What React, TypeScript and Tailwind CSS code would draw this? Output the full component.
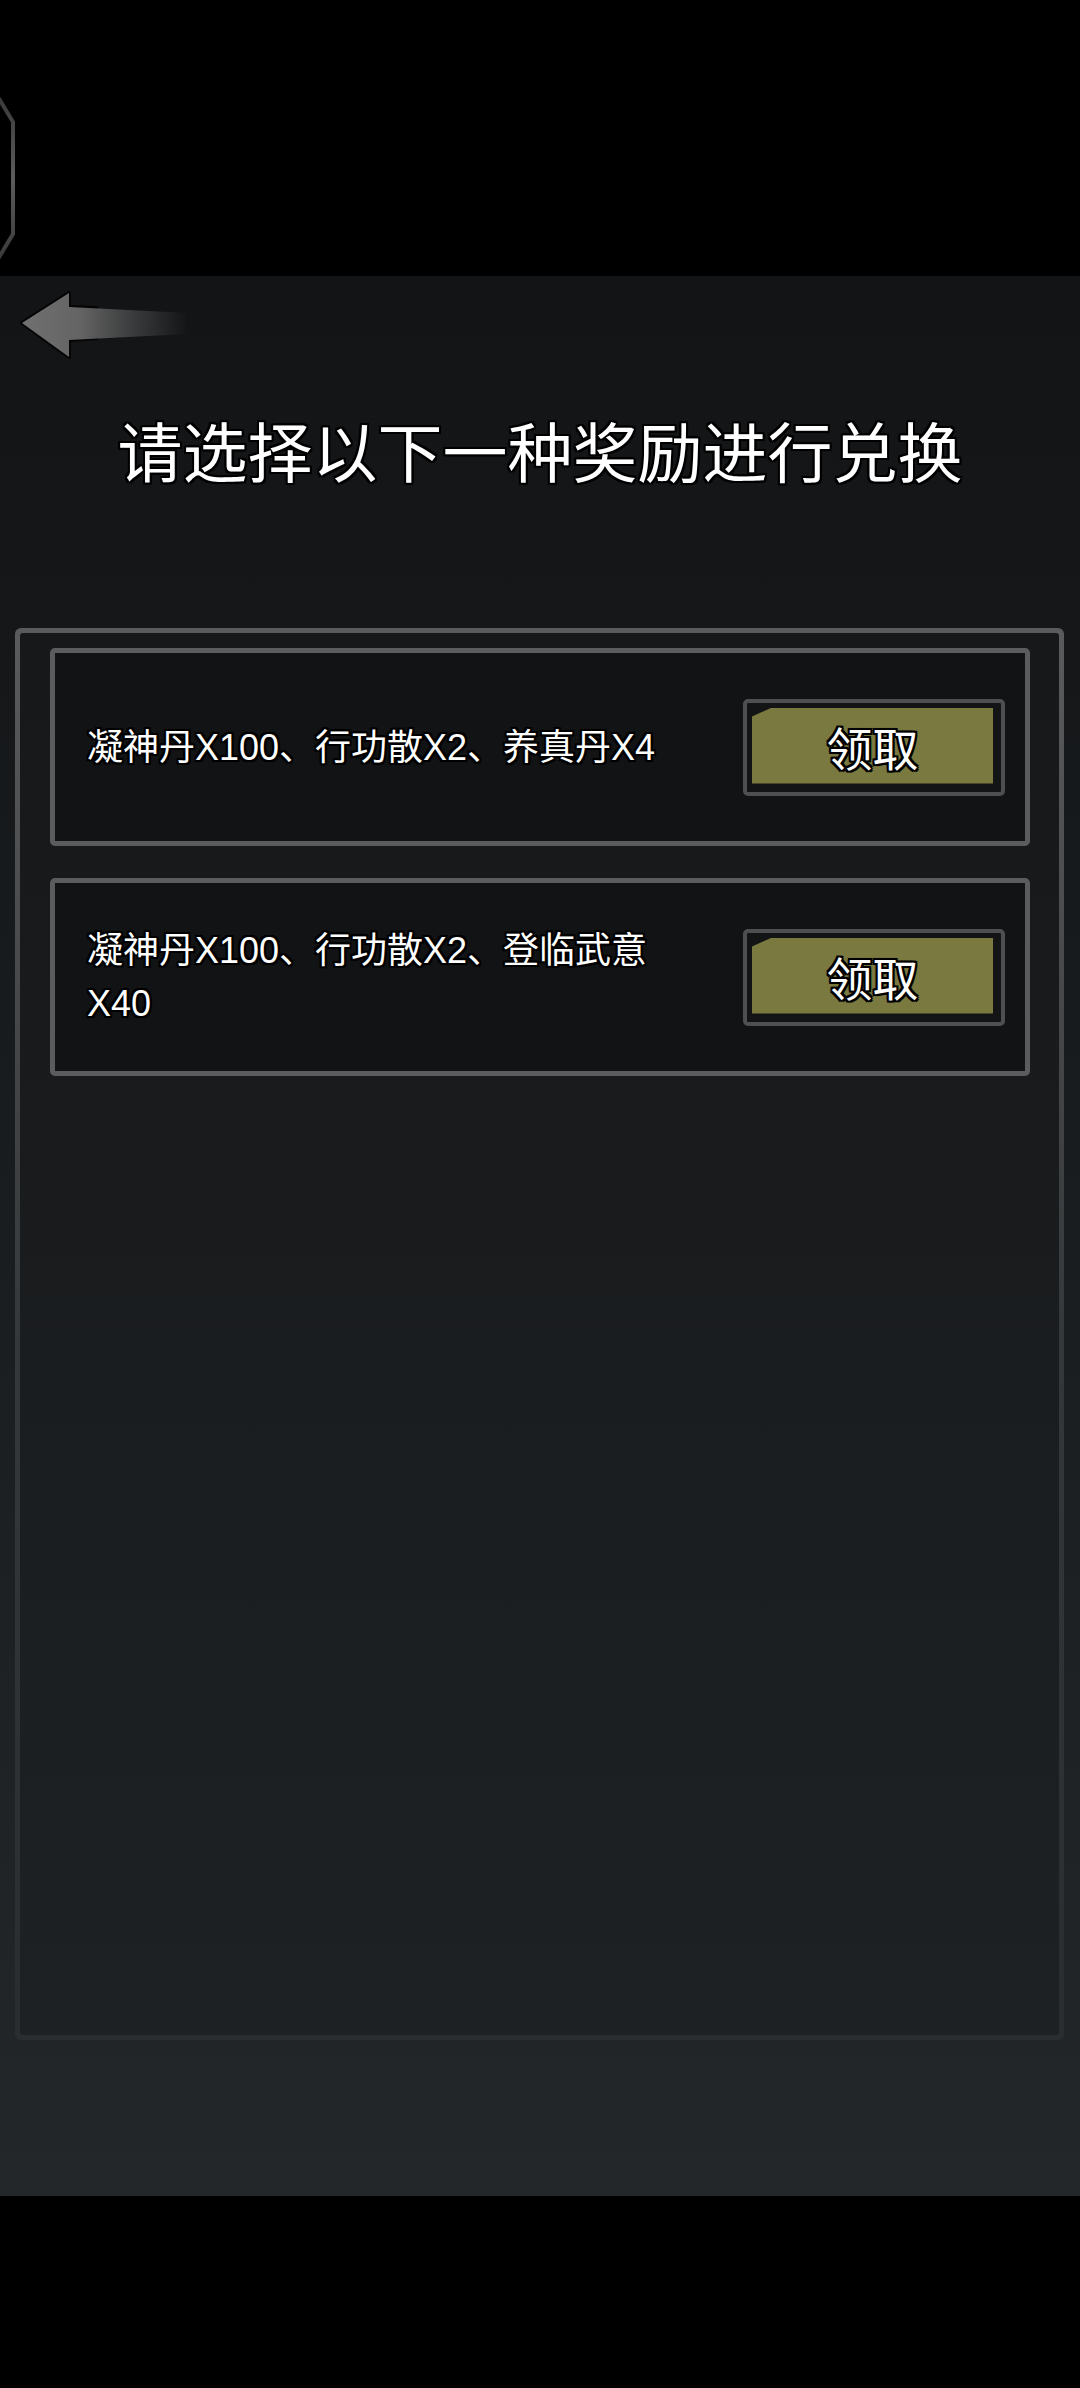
import React from 'react';

const outline =
  '[text-shadow:0_0_3px_#000,2px_2px_0_#000,-2px_-2px_0_#000,2px_-2px_0_#000,-2px_2px_0_#000,0_2px_0_#000,0_-2px_0_#000,2px_0_0_#000,-2px_0_0_#000]';

const rewards = ['凝神丹X100、行功散X2、养真丹X4', '凝神丹X100、行功散X2、登临武意X40'];

const BackArrow = () => (
  <svg width="180" height="76" viewBox="0 0 180 76">
    <defs>
      <linearGradient id="shaft" x1="0" y1="0" x2="1" y2="0">
        <stop offset="0" stopColor="#707070" />
        <stop offset="0.35" stopColor="#646464" />
        <stop offset="1" stopColor="#5e5e5e" stopOpacity="0" />
      </linearGradient>
    </defs>
    <path
      d="M80 20 L51 19 L51 5 L4 35 L51 69 L51 52 L80 50"
      fill="none"
      stroke="#050505"
      strokeWidth="4"
      strokeLinejoin="round"
    />
    <path d="M4 35 L51 5 L51 19 L170 25 L170 46 L51 52 L51 69 Z" fill="url(#shaft)" />
  </svg>
);

const ClaimButton = () => (
  <div className="w-[262px] h-[97px] rounded-[5px] border-[4px] border-[#4e4f51] bg-[#131415] pl-[5px] pt-[5px] pr-[8px] pb-[8px] shrink-0">
    <div className="w-full h-full bg-[#7a7940] [clip-path:polygon(20px_0,100%_0,100%_100%,0_100%,0_9px)] flex items-center justify-center">
      <span className={`text-[46px] leading-none text-white ${outline}`}>领取</span>
    </div>
  </div>
);

const RewardCard = ({ text }: { text: string }) => (
  <div className="h-[198px] rounded-[5px] border-[5px] border-[#5b5c5d] bg-[#121314] flex items-center pl-[32px] pr-[20px]">
    <p
      className={`w-[610px] text-[36px] leading-[53px] text-white ${outline}`}
      style={{ fontFamily: '"Liberation Sans", "Noto Sans CJK SC", sans-serif' }}
    >
      {text}
    </p>
    <div className="flex-1" />
    <ClaimButton />
  </div>
);

export default function App() {
  return (
    <div
      className="w-[1080px] h-[2388px] bg-black flex flex-col overflow-hidden"
      style={{ fontFamily: '"Noto Sans CJK SC", "Noto Sans", sans-serif' }}
    >
      {/* top bar */}
      <div className="h-[276px] shrink-0 pt-[97px]">
        <svg width="20" height="164" viewBox="0 0 20 164">
          <defs>
            <linearGradient id="oct" x1="0" y1="0" x2="0" y2="1">
              <stop offset="0" stopColor="#3a3a3a" />
              <stop offset="0.5" stopColor="#5c5c5c" />
              <stop offset="1" stopColor="#3a3a3a" />
            </linearGradient>
          </defs>
          <path d="M-2 0 L13 25 L13 137 L-2 162" fill="none" stroke="url(#oct)" strokeWidth="4" />
        </svg>
      </div>

      {/* main */}
      <div className="h-[1920px] shrink-0 bg-gradient-to-b from-[#121416] via-[#1a1d1f] to-[#23272a] flex flex-col">
        <div className="pt-[12px] pl-[18px]">
          <BackArrow />
        </div>

        <h1 className={`mt-[53px] text-center text-[65px] leading-none text-white ${outline}`}>
          请选择以下一种奖励进行兑换
        </h1>

        <div className="mt-[146px] ml-[15px] mr-[16px] h-[1412px] rounded-[6px] bg-gradient-to-b from-[#5a5b5c] via-[#35383a] to-[#2a2d30] p-[5px]">
          <div className="h-full rounded-[3px] bg-gradient-to-b from-[#16181a] to-[#1e2123] pt-[15px] pl-[30px] pr-[29px] flex flex-col gap-[32px]">
            {rewards.map((text, i) => (
              <RewardCard key={i} text={text} />
            ))}
          </div>
        </div>
      </div>
    </div>
  );
}
